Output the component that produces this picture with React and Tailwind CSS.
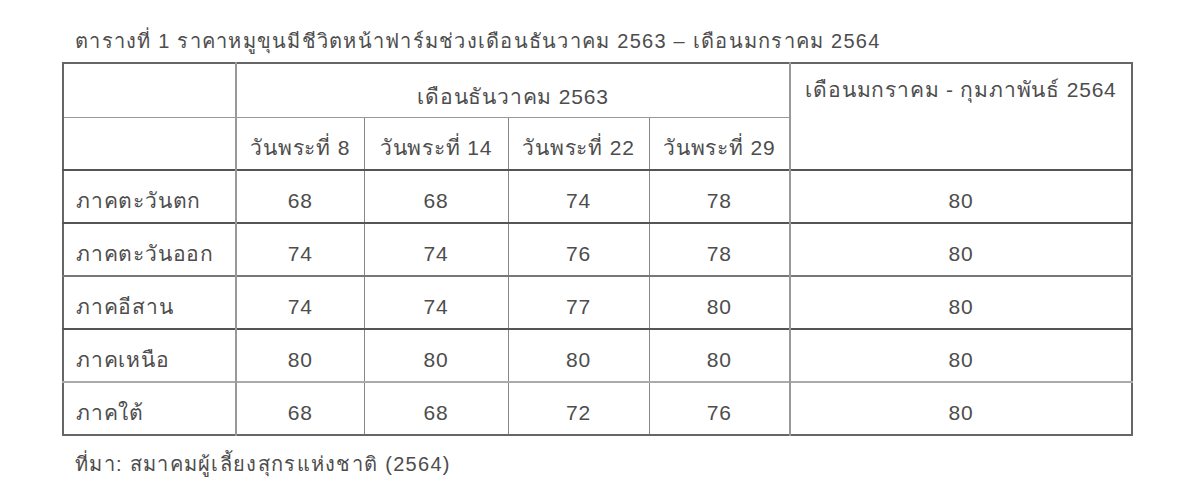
import React from "react";

const rows = [
  ["ภาคตะวันตก", "68", "68", "74", "78", "80"],
  ["ภาคตะวันออก", "74", "74", "76", "78", "80"],
  ["ภาคอีสาน", "74", "74", "77", "80", "80"],
  ["ภาคเหนือ", "80", "80", "80", "80", "80"],
  ["ภาคใต้", "68", "68", "72", "76", "80"],
];

const rowBorders = [
  "border-t-[#555]",
  "border-t-[#555]",
  "border-t-[#777]",
  "border-t-[#555]",
  "border-t-[#aaa]",
];

export default function App() {
  return (
    <div
      className="w-[1200px] h-[502px] bg-white text-[#4d4d4d] pl-[62px] pt-[26px]"
      style={{ fontFamily: '"Liberation Sans", "Noto Sans", sans-serif' }}
    >
      <p className="pl-[13px] text-[20px] tracking-[1.25px] leading-[30px] h-[36px]">
        ตารางที่ 1 ราคาหมูขุนมีชีวิตหน้าฟาร์มช่วงเดือนธันวาคม 2563 – เดือนมกราคม 2564
      </p>
      <table className="w-[1069px] border-collapse table-fixed border-2 border-[#666] text-[21px] tracking-[0.8px]">
        <colgroup>
          <col className="w-[173px]" />
          <col className="w-[128px]" />
          <col className="w-[144px]" />
          <col className="w-[141px]" />
          <col className="w-[141px]" />
          <col className="w-[342px]" />
        </colgroup>
        <tbody>
          <tr className="h-[54px]">
            <td className="border border-[#999] border-r-2 border-r-[#999]"></td>
            <td colSpan={4} className="border border-[#999] text-center align-middle pt-[12px]">
              เดือนธันวาคม 2563
            </td>
            <td rowSpan={2} className="border border-[#999] border-l-2 border-l-[#999] text-center align-top pt-[10px]">
              เดือนมกราคม - กุมภาพันธ์ 2564
            </td>
          </tr>
          <tr className="h-[53px]">
            <td className="border border-[#999] border-r-2 border-r-[#999] border-t-[#777]"></td>
            <td className="border border-[#888] border-t-[#777] text-center pt-[8px]">วันพระที่ 8</td>
            <td className="border border-[#888] border-t-[#777] text-center pt-[8px]">วันพระที่ 14</td>
            <td className="border border-[#888] border-t-[#777] text-center pt-[8px]">วันพระที่ 22</td>
            <td className="border border-[#888] border-t-[#777] text-center pt-[8px]">วันพระที่ 29</td>
          </tr>
          {rows.map((r, i) => (
            <tr key={i} className="h-[53px]">
              <td className={`border-x border-b border-t-2 border-[#999] border-r-2 pl-[12px] pt-[8px] ${rowBorders[i]}`}>
                {r[0]}
              </td>
              {r.slice(1).map((v, j) => (
                <td
                  key={j}
                  className={`border-x border-b border-t-2 border-[#888] text-center pt-[8px] ${rowBorders[i]} ${j === 3 ? "border-r-2 border-r-[#999]" : ""}`}
                >
                  {v}
                </td>
              ))}
            </tr>
          ))}
        </tbody>
      </table>
      <p className="pl-[13px] text-[20px] tracking-[1.3px] leading-[30px] pt-[13px]">
        ที่มา: สมาคมผู้เลี้ยงสุกรแห่งชาติ (2564)
      </p>
    </div>
  );
}
